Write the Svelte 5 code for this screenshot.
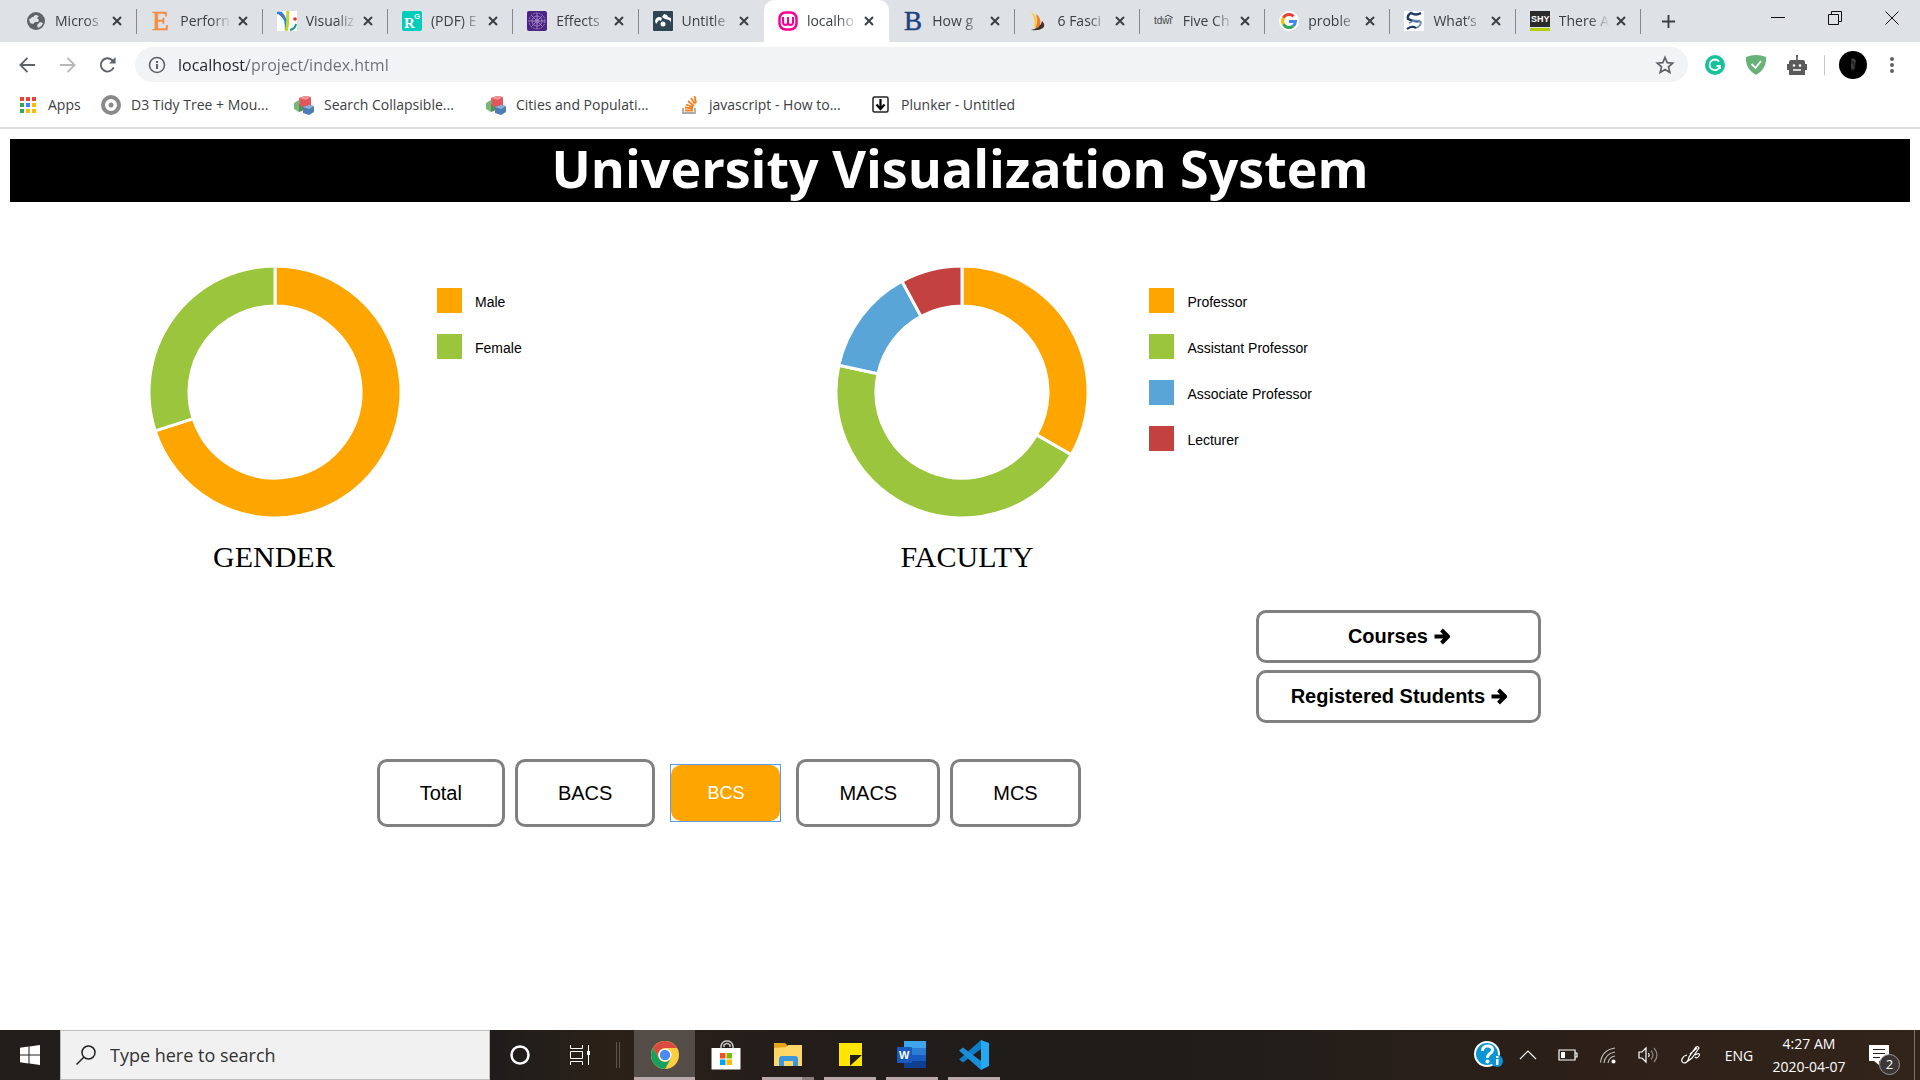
<script>
  const tabs = [
    { icon: 'globe', title: 'Micros' },
    { icon: 'elsevier', title: 'Perforn' },
    { icon: 'viz', title: 'Visualiz' },
    { icon: 'rg', title: '(PDF) E' },
    { icon: 'effects', title: 'Effects' },
    { icon: 'untitled', title: 'Untitle' },
    { icon: 'wamp', title: 'localho', active: true },
    { icon: 'brit', title: 'How g' },
    { icon: 'fasc', title: '6 Fasci' },
    { icon: 'tdwi', title: 'Five Ch' },
    { icon: 'google', title: 'proble' },
    { icon: 'whats', title: 'What’s' },
    { icon: 'shy', title: 'There A' }
  ];

  const bookmarks = [
    { icon: 'apps', label: 'Apps' },
    { icon: 'd3tree', label: 'D3 Tidy Tree + Mou...' },
    { icon: 'cubes', label: 'Search Collapsible...' },
    { icon: 'cubes', label: 'Cities and Populati...' },
    { icon: 'stack', label: 'javascript - How to...' },
    { icon: 'plunker', label: 'Plunker - Untitled' }
  ];

  const charts = [
    {
      name: 'GENDER',
      slices: [
        { label: 'Male', value: 70, color: '#ffa500' },
        { label: 'Female', value: 30, color: '#9bc53d' }
      ]
    },
    {
      name: 'FACULTY',
      wide: true,
      slices: [
        { label: 'Professor', value: 33.3, color: '#ffa500' },
        { label: 'Assistant Professor', value: 45.1, color: '#9bc53d' },
        { label: 'Associate Professor', value: 13.7, color: '#5aa5d8' },
        { label: 'Lecturer', value: 7.9, color: '#c3423f' }
      ]
    }
  ];

  const programs = ['Total', 'BACS', 'BCS', 'MACS', 'MCS'];
  let selected = $state('BCS');

  function arcs(slices) {
    const total = slices.reduce((sum, s) => sum + s.value, 0);
    const point = (r, a) => `${(r * Math.sin(a)).toFixed(2)} ${(-r * Math.cos(a)).toFixed(2)}`;
    let start = 0;
    return slices.map((s) => {
      const end = start + (s.value / total) * Math.PI * 2;
      const large = end - start > Math.PI ? 1 : 0;
      const d = `M${point(126, start)}A126 126 0 ${large} 1 ${point(126, end)}L${point(86, end)}A86 86 0 ${large} 0 ${point(86, start)}Z`;
      start = end;
      return { d, color: s.color };
    });
  }
</script>

{#snippet icon(name)}
  <svg class="icon" viewBox="0 0 20 20" aria-hidden="true">
    {#if name === 'globe'}
      <circle cx="10" cy="10" r="9" fill="#5f6368" />
      <path d="M3 8c2 0 2-2 4-2 1 0 1-2 3-2l3 1-2 2 2 2-1 2H9l-2 2-3-1zM11 14l3-3 3 1c-1 3-3 4-5 5z" fill="#dee1e6" />
    {:else if name === 'elsevier'}
      <text x="1" y="19" font-family="Liberation Serif, serif" font-size="28" fill="#f58c3c" stroke="#f58c3c" stroke-width=".6">E</text>
    {:else if name === 'viz'}
      <path d="M0 0h20v20H0z" fill="#fff" />
      <path d="M1 1l8 8 1 10" stroke="#e8332a" stroke-width="2" fill="none" />
      <path d="M0 2l4 0q6 6 5 17" stroke="#1e88e5" stroke-width="2.500" fill="none" />
      <path d="M11 0c-1 7 1 12-2 20" stroke="#c6d420" stroke-width="3" fill="none" />
      <path d="M19 13q-1 5-6 6" stroke="#159a80" stroke-width="2" fill="none" />
      <circle cx="18" cy="8" r="1.800" fill="#e8332a" />
    {:else if name === 'rg'}
      <rect width="20" height="20" rx="2" fill="#00ccbb" />
      <text x="2" y="17" font-family="Liberation Serif, serif" font-weight="bold" font-size="15" fill="#fff">R</text>
      <text x="12" y="8" font-family="Liberation Sans, sans-serif" font-weight="bold" font-size="8" fill="#fff">G</text>
    {:else if name === 'effects'}
      <rect width="20" height="20" rx="2" fill="#4b2382" />
      <g fill="none" stroke="#9b7fc0" stroke-width="1">
        <circle cx="10" cy="10" r="8" stroke-dasharray="2 1" /><circle cx="10" cy="10" r="5" /><circle cx="10" cy="10" r="2" />
        <path d="M10 2v16M2 10h16M4.500 4.500l11 11M15.500 4.500l-11 11" />
      </g>
    {:else if name === 'untitled'}
      <rect width="20" height="20" rx="1" fill="#2f4554" />
      <path d="M2 10c1-4 4-5 7-3l-1 3-2-1-3 4zM9 6l2-3 3 1 1 2 3 1v4l-2-2-4-1z" fill="#fff" />
      <circle cx="10" cy="13" r="2.500" fill="#fff" />
    {:else if name === 'wamp'}
      <rect x="1.500" y="1.500" width="17" height="17" rx="6" fill="none" stroke="#f70094" stroke-width="2.500" />
      <path d="M5 6v5q0 3 2.500 3T10 11V6M10 11q0 3 2.500 3T15 11V6" fill="none" stroke="#f70094" stroke-width="2" />
    {:else if name === 'brit'}
      <text x="1" y="19" font-family="Liberation Serif, serif" font-size="27" fill="#1f4380" stroke="#1f4380" stroke-width=".5">B</text>
    {:else if name === 'fasc'}
      <path d="M2 1q7 3 5 14l-2 2Q7 8 2 1z" fill="#ffc928" />
      <path d="M7 3q6 4 4 12l-6 4q5-6 2-16z" fill="#f47c20" />
      <path d="M13 10q4 4 1 7-4 3-12 2 10-2 11-9z" fill="#43312d" />
    {:else if name === 'tdwi'}
      <text x="0" y="13" font-family="Liberation Sans, sans-serif" font-size="10" fill="#444">tdwi</text>
      <path d="M11 6l3-2 3 2 2 1" fill="none" stroke="#444" />
    {:else if name === 'google'}
      <circle cx="10" cy="10" r="10" fill="#fff" />
      <g fill="none" stroke-width="3">
        <path d="M14.600 5.400A6.500 6.500 0 0 0 4.400 6.750" stroke="#ea4335" />
        <path d="M4.400 6.750a6.500 6.500 0 0 0 0 6.500" stroke="#fbbc05" />
        <path d="M4.400 13.250A6.500 6.500 0 0 0 14.200 15" stroke="#34a853" />
        <path d="M14.200 15a6.500 6.500 0 0 0 2.300-4.500H10" stroke="#4285f4" />
      </g>
    {:else if name === 'whats'}
      <path d="M0 0h20v20H0z" fill="#fff" />
      <path d="M17 2q-5 3-10 0-4 2-3 6 5 3 12 2" fill="none" stroke="#1f3a5f" stroke-width="2.500" />
      <path d="M3 18q5-4 9-1 5-2 5-6-5-3-12 1" fill="none" stroke="#6a8fb5" stroke-width="1.800" />
      <path d="M3 18q5-4 9-1" fill="none" stroke="#1f3a5f" stroke-width="2" />
    {:else if name === 'shy'}
      <path d="M0 0h20v16H0z" fill="#2b2b2b" /><path d="M0 17h20v3H0z" fill="#b2cc0c" />
      <text x="1" y="11" font-family="Liberation Sans, sans-serif" font-weight="bold" font-size="9" fill="#fff">SHY</text>
    {:else if name === 'apps'}
      {#each ['#ea4335', '#ea4335', '#ea4335', '#34a853', '#4285f4', '#fbbc05', '#34a853', '#fbbc05', '#fbbc05'] as c, i}
        <rect x={2 + (i % 3) * 6} y={2 + Math.floor(i / 3) * 6} width="4" height="4" fill={c} />
      {/each}
    {:else if name === 'd3tree'}
      <circle cx="10" cy="10" r="8" fill="none" stroke="#8a8a8a" stroke-width="4" /><circle cx="10" cy="10" r="2.500" fill="#8a8a8a" />
    {:else if name === 'cubes'}
      <path d="M0 8l5-3 5 3v6l-5 3-5-3z" fill="#79b877" /><path d="M5 9l5-2v8l-5 2z" fill="#4f9256" />
      <path d="M5 3l6-2 6 1v8l-5 3-6-2z" fill="#e0565b" /><path d="M5 3l7 2 5-3-6-1z" fill="#f29091" />
      <path d="M9 12l6-2 5 1v6l-5 3-6-2z" fill="#4e7cb5" /><path d="M9 12l6 2 5-3-5-1z" fill="#91b1d8" />
    {:else if name === 'stack'}
      <path d="M4 13v5h12v-5" fill="none" stroke="#aaa" stroke-width="1.800" />
      <path d="M6 15.500h8M6 12.500l8 1M7 9.500l7 2.500M9 6l6 5M12 3l4 6M15.500 1l1.500 7" stroke="#f48024" stroke-width="1.800" />
    {:else if name === 'plunker'}
      <rect x="2" y="2" width="15" height="15" rx="1.500" fill="#fff" stroke="#222" stroke-width="1.500" />
      <path d="M9.500 4v10M5.500 9.500l4 4.500 4-4.500" fill="none" stroke="#000" stroke-width="2.200" />
    {/if}
  </svg>
{/snippet}

{#snippet arrow()}
  <svg class="arrow" viewBox="0 0 17 20" aria-hidden="true"><path d="M1.500 10.500h13M8.500 4l6.500 6.500L8.500 17" /></svg>
{/snippet}

<div class="screen">
  <header class="browser">
    <div class="tabstrip">
      <div class="tabs">
        {#each tabs as tab}
          <div class="tab" class:active={tab.active}>
            {@render icon(tab.icon)}
            <button class="tab-title">{tab.title}</button>
            <button class="tab-close" aria-label="Close tab">
              <svg viewBox="0 0 10 10"><path d="M1 1l8 8M9 1L1 9" /></svg>
            </button>
          </div>
        {/each}
      </div>
      <button class="new-tab" aria-label="New tab"><svg viewBox="0 0 16 16"><path d="M8 1v14M1 8h14" /></svg></button>
      <div class="window-controls">
        <button aria-label="Minimize"><svg viewBox="0 0 14 14"><path d="M0 6.500h14" /></svg></button>
        <button aria-label="Restore"><svg viewBox="0 0 14 14"><path d="M.5 3.500h10v10H.5zM3.500 3V.5h10v10H11" /></svg></button>
        <button aria-label="Close"><svg viewBox="0 0 14 14"><path d="M.5.5l13 13M13.500.5l-13 13" /></svg></button>
      </div>
    </div>

    <div class="toolbar">
      <nav class="navigation">
        <button aria-label="Back"><svg viewBox="0 0 20 20"><path d="M18 10H3M10 2.500L2.500 10l7.500 7.500" /></svg></button>
        <button class="muted" aria-label="Forward"><svg viewBox="0 0 20 20"><path d="M2 10h15M10 2.500l7.500 7.500-7.500 7.500" /></svg></button>
        <button aria-label="Reload"><svg viewBox="0 0 20 20"><path d="M16.500 12.500A7 7 0 1 1 15 5l2 2" /><path class="solid" d="M18.500 1.500v7h-7z" /></svg></button>
      </nav>
      <div class="omnibox">
        <svg class="info" viewBox="0 0 18 18" aria-hidden="true"><circle cx="9" cy="9" r="7.500" fill="none" stroke="#5f6368" stroke-width="1.600" /><path d="M8 8h2v5H8zM8 5h2v2H8z" fill="#5f6368" /></svg>
        <input class="url" aria-label="Address" value="localhost/project/index.html" />
        <button class="star" aria-label="Bookmark this page"><svg viewBox="0 0 20 20"><path d="M10 2.500l2.200 5.200 5.500.5-4.200 3.700 1.300 5.500-4.800-2.900-4.800 2.900 1.300-5.500-4.200-3.700 5.500-.5z" /></svg></button>
      </div>
      <div class="extensions">
        <button aria-label="Grammarly"><svg viewBox="0 0 20 20"><circle cx="10" cy="10" r="10" fill="#15c39a" /><path d="M14 6.500A5.300 5.300 0 1 0 15 11h-3.500M15 10.500V14" fill="none" stroke="#fff" stroke-width="1.800" /></svg></button>
        <button aria-label="AdGuard"><svg viewBox="0 0 20 20"><path d="M0 2q5-2 10-2t10 2q1 12-10 18Q-1 14 0 2z" fill="#67b279" /><path d="M5.500 9l4 4L15 6" fill="none" stroke="#fff" stroke-width="1.800" /></svg></button>
        <button aria-label="Robot"><svg viewBox="0 0 20 20"><path d="M9.200 1h1.600v4H9.200zM4 5h12q2 0 2 2v2h2v6h-2v5H2v-5H0V9h2V7q0-2 2-2z" fill="#5a5a5a" /><path d="M9 0h2v2H9z" fill="#5a5a5a" /><circle cx="7" cy="10.500" r="1.300" fill="#fff" /><circle cx="13" cy="10.500" r="1.300" fill="#fff" /><path d="M6 15h8" stroke="#fff" stroke-width="1.500" /></svg></button>
      </div>
      <span class="divider"></span>
      <button class="avatar" aria-label="Profile"><svg viewBox="0 0 28 28"><circle cx="14" cy="14" r="14" /><path d="M12 8q4-3 5 2l-1 7-2 3q-3-1-2-6z" fill="#292929" /><path d="M13 9q3-1 3 2M13 13v3l2 1" fill="none" stroke="#555" /></svg></button>
      <button class="menu" aria-label="Menu"><svg viewBox="0 0 20 20"><circle cx="10" cy="4" r="2" /><circle cx="10" cy="10" r="2" /><circle cx="10" cy="16" r="2" /></svg></button>
    </div>

    <nav class="bookmarks">
      {#each bookmarks as mark}
        <a href="#bookmark">{@render icon(mark.icon)}<span>{mark.label}</span></a>
      {/each}
    </nav>
  </header>

  <main>
    <h1>University Visualization System</h1>

    <section class="charts">
      {#each charts as chart}
        <div class="chart" class:wide={chart.wide}>
          <figure>
            <svg class="donut" viewBox="-125 -125 250 250" role="img" aria-label={chart.name}>
              {#each arcs(chart.slices) as arc}
                <path d={arc.d} fill={arc.color} />
              {/each}
            </svg>
            <figcaption>{chart.name}</figcaption>
          </figure>
          <ul class="legend">
            {#each chart.slices as slice}
              <li><span class="swatch" style="background: {slice.color}"></span><span>{slice.label}</span></li>
            {/each}
          </ul>
        </div>
      {/each}
    </section>

    <div class="links">
      <button>Courses {@render arrow()}</button>
      <button>Registered Students {@render arrow()}</button>
    </div>

    <div class="programs">
      {#each programs as program}
        <button class:selected={program === selected} onclick={() => (selected = program)}>{program}</button>
      {/each}
    </div>
  </main>

  <footer class="taskbar">
    <button class="start" aria-label="Start"><svg viewBox="0 0 20 20"><path d="M0 2.800L8.500 1.600v8H0zM9.500 1.500L20 0v9.600H9.500zM0 10.500h8.500v8L0 17.300zM9.500 10.500H20V20L9.500 18.600z" fill="#fff" /></svg></button>
    <label class="search">
      <svg viewBox="0 0 20 20" aria-hidden="true"><circle cx="12.500" cy="7.500" r="6.500" /><path d="M8 12l-7.500 7.500" /></svg>
      <input placeholder="Type here to search" aria-label="Type here to search" />
    </label>
    <button class="task" aria-label="Cortana"><svg class="small" viewBox="0 0 20 20"><circle cx="10" cy="10" r="8.500" fill="none" stroke="#fff" stroke-width="2.500" /></svg></button>
    <button class="task" aria-label="Task view"><svg class="small" viewBox="0 0 20 20"><path d="M.5 0v3.500h12V0M.5 6.500h12v7H.5zM.5 20v-3.500h12V20M18.500 0v20" fill="none" stroke="#fff" /><path d="M17 6h3v4h-3z" fill="#fff" /></svg></button>
    <span class="grip"></span>
    <div class="apps">
      <button class="current" aria-label="Chrome">
        <svg viewBox="0 0 30 30"><circle cx="15" cy="15" r="14" fill="#ffcd40" /><path d="M2.900 8A14 14 0 0 1 27.100 8H15a7 7 0 0 0-6 10.500z" fill="#db4a3f" /><path d="M2.900 8A14 14 0 0 0 15 29l6-10.500A7 7 0 0 1 9 18.500z" fill="#17a05d" /><circle cx="15" cy="15" r="6.500" fill="#fff" /><circle cx="15" cy="15" r="5.200" fill="#4a8af4" /></svg>
      </button>
      <button aria-label="Store">
        <svg viewBox="0 0 30 30"><path d="M10 8V6q1-5 6-5t6 5v2M13 7V5q3-3 6 0v2" fill="none" stroke="#ccc" stroke-width="1.500" /><path d="M.5 8h29v21.500H.5z" fill="#fff" /><path d="M9 13h5.500v5.500H9z" fill="#f25022" /><path d="M15.500 13H21v5.500h-5.500z" fill="#7fba00" /><path d="M9 19.500h5.500V25H9z" fill="#00a4ef" /><path d="M15.500 19.500H21V25h-5.500z" fill="#ffb900" /></svg>
      </button>
      <button class="open stacked" aria-label="File Explorer">
        <svg viewBox="0 0 30 30"><path d="M1 3h11l2 2v5H1z" fill="#e8a317" /><path d="M1 8l12-1 2-2h14v21H1z" fill="#ffd667" /><path d="M6 26v-7q0-3 3-3h13q3 0 3 3v7h-5v-5h-9v5z" fill="#3a96dd" /></svg>
      </button>
      <button class="open" aria-label="Sticky Notes">
        <svg viewBox="0 0 30 30"><path d="M4 3h23v12L15 26H4z" fill="#ffe500" /><path d="M15 26V15h12z" fill="#1f1c1a" /><path d="M15 26h12V15z" fill="#ffe500" /></svg>
      </button>
      <button class="open" aria-label="Word">
        <svg viewBox="0 0 30 30"><path d="M7 1h22v7H7z" fill="#41a5ee" /><path d="M7 8h22v7H7z" fill="#2b7cd3" /><path d="M7 15h22v6H7z" fill="#185abd" /><path d="M7 21h22v7H7z" fill="#103f91" /><rect x="0" y="7" width="15" height="16" rx="1" fill="#185abd" /><text x="2" y="19" font-family="Liberation Sans, sans-serif" font-weight="bold" font-size="11" fill="#fff">W</text></svg>
      </button>
      <button class="open" aria-label="Visual Studio Code">
        <svg viewBox="0 0 30 30"><path d="M22 0l8 3v23l-8 4z" fill="#24a9f2" /><path d="M22 0v9L4 22.500 0 19.500z" fill="#0f7cc4" /><path d="M22 30v-9L4 7.500 0 10.500z" fill="#1a8ed8" /></svg>
      </button>
    </div>
    <div class="tray">
      <button aria-label="Help"><svg class="help" viewBox="0 0 30 30"><circle cx="14" cy="14" r="12" fill="#0a96d6" stroke="#fff" stroke-width="2" /><path d="M9.500 11q0-5 5-5t5 4q0 2-2.500 3.500T14.500 18" fill="none" stroke="#fff" stroke-width="3" /><circle cx="14.500" cy="21.500" r="2" fill="#fff" /><circle cx="24" cy="21" r="6" fill="#0a96d6" /><path d="M23 19h2.500v6H23zM23 16h2.500v2H23z" fill="#fff" /></svg></button>
      <button aria-label="Show hidden icons"><svg viewBox="0 0 20 20"><path d="M2 14l8-8 8 8" /></svg></button>
      <button aria-label="Battery"><svg viewBox="0 0 20 20"><path d="M1 5h16v10H1zM17 8h2v4h-2" /><path d="M3 7h4v6H3z" fill="#fff" stroke="none" /></svg></button>
      <button aria-label="Wi-Fi"><svg viewBox="0 0 20 20"><g opacity=".7"><path d="M2.500 17.500Q4 5 17 3M6 18Q7 9 17 7M10 18q1-6 7-7" /></g><circle cx="15.500" cy="16.500" r="1.500" fill="#fff" /></svg></button>
      <button aria-label="Volume"><svg viewBox="0 0 20 20"><path d="M1 7h3l4-4v14l-4-4H1zM10.500 8q1.500 2 0 4" /><path d="M13 5.500q4 4.500 0 9M16 3q6 7 0 14" opacity=".45" /></svg></button>
      <button class="ink" aria-label="Windows Ink"><svg viewBox="0 0 20 20"><path d="M7 15q-1 3-4 3-3-1-2-4 1-3 5-4M7 16l1-4 7-10q2-1 3 1l-7 10zM9 9l7-6M14 10q6-3 4 1-2 3-4 1" /></svg></button>
      <button class="lang">ENG</button>
      <button class="clock"><span>4:27 AM</span><span>2020-04-07</span></button>
      <button class="notes" aria-label="Notifications"><svg viewBox="0 0 30 30"><path d="M0 5h20v16H10v4l-5-4H0z" fill="#fff" stroke="none" /><path d="M4 9.500h12M4 13.500h12M4 17.500h7" stroke="#2b2019" /></svg><span class="badge">2</span></button>
      <span class="peek"></span>
    </div>
  </footer>
</div>

<style>
  :global(body) { margin: 0; background: #fff; }
  .screen, .screen * { box-sizing: border-box; }
  .screen { display: flex; flex-direction: column; min-height: 100vh; font-family: "Open Sans", "Noto Sans", sans-serif; color: #3c4043; }
  button { margin: 0; padding: 0; border: 0; background: none; font: inherit; color: inherit; }
  svg { display: block; flex: none; }
  .icon { width: 20px; height: 20px; }

  .browser { border-bottom: 2px solid #dadce0; }
  .tabstrip { display: flex; height: 42px; background: #dee1e6; padding-left: 12px; }
  .tabs { display: flex; flex: 1; min-width: 0; }
  .tab { position: relative; display: flex; flex: 1 1 0; align-items: center; min-width: 0; padding: 0 15px 0 14px; border-radius: 10px 10px 0 0; }
  .tab::after { content: ""; position: absolute; right: 0; top: 9px; width: 1px; height: 25px; background: #85888c; }
  .tab.active { background: #fff; }
  .tab.active::after, .tab:has(+ .active)::after { display: none; }
  .tab-title { flex: 1; min-width: 0; margin: 0 6px 0 9px; overflow: hidden; white-space: nowrap; text-align: left; font-size: 14px; line-height: 22px; -webkit-mask-image: linear-gradient(90deg, #000 60%, transparent); mask-image: linear-gradient(90deg, #000 60%, transparent); }
  .tab-close svg { width: 10px; height: 10px; stroke: #3c4043; stroke-width: 2; }
  .new-tab { flex: none; width: 54px; display: grid; place-items: center; }
  .new-tab svg { width: 15px; height: 15px; stroke: #3c4043; stroke-width: 2; }
  .window-controls { display: flex; flex: none; width: 225px; padding: 0 0 6px 54px; }
  .window-controls button { flex: 1; display: grid; place-items: center; }
  .window-controls svg { width: 14px; height: 14px; fill: none; stroke: #111; }

  .toolbar { display: flex; align-items: center; height: 45px; padding: 0 18px; }
  .navigation { display: flex; gap: 21px; width: 117px; }
  .navigation svg { width: 19px; height: 20px; fill: none; stroke: #5f6368; stroke-width: 2; }
  .navigation .solid { fill: #5f6368; stroke: none; }
  .navigation .muted { opacity: .45; }
  .omnibox { display: flex; flex: 1; align-items: center; height: 35px; padding: 0 13px; border-radius: 18px; background: #f1f3f4; }
  .info { width: 18px; height: 18px; }
  .url { flex: 1; min-width: 0; margin-left: 12px; padding: 0; border: 0; outline: 0; font: inherit; font-size: 16px; line-height: 24px; color: transparent; background: linear-gradient(90deg, #202124 69px, #6a6e73 69px); -webkit-background-clip: text; background-clip: text; }
  .star svg { width: 20px; height: 20px; fill: none; stroke: #5f6368; stroke-width: 1.7; }
  .extensions { display: flex; gap: 21px; margin: 0 17px; }
  .extensions svg { width: 20px; height: 20px; }
  .divider { width: 1px; height: 20px; background: #c6c9cd; }
  .avatar { margin: 0 15px 0 14px; }
  .avatar svg { width: 28px; height: 28px; }
  .menu svg { width: 20px; height: 20px; fill: #5f6368; }

  .bookmarks { display: grid; grid-template-columns: 83px 193px 192px 193px 192px auto; justify-content: start; align-items: center; height: 40px; padding: 0 18px 4px; }
  .bookmarks a { display: flex; align-items: center; gap: 10px; color: #3c4043; text-decoration: none; font-size: 14px; line-height: 20px; white-space: nowrap; }

  main { display: flex; flex: 1; flex-direction: column; padding: 10px 10px 0; color: #000; }
  h1 { margin: 0; height: 63px; background: #000; color: #fff; font-size: 52px; line-height: 58px; text-align: center; }
  .charts { display: grid; grid-template-columns: 687fr 1072fr; padding: 65px 0 0 140px; }
  .chart { display: flex; align-items: flex-start; gap: 37px; }
  .chart.wide { gap: 62px; }
  figure { margin: 0; }
  .donut { width: 250px; height: 250px; }
  .donut path { stroke: #fff; stroke-width: 3; }
  figcaption { margin-top: 23px; padding-left: 63px; font: 30px/34px "Liberation Serif", serif; }
  .legend { display: grid; gap: 21px; margin: 0; padding: 21px 0 0; list-style: none; font: 14px/28px "Liberation Sans", sans-serif; }
  .legend li { display: flex; gap: 13px; height: 25px; }
  .swatch { width: 25px; height: 25px; }

  .links { display: grid; gap: 7px; align-self: flex-end; width: 285px; margin: 36px 19.4% 0 0; }
  .links button { display: flex; align-items: center; justify-content: center; gap: 5px; height: 53px; padding-bottom: 2px; border: 3px solid #808080; border-radius: 10px; font: bold 20px/24px "Liberation Sans", sans-serif; }
  .arrow { width: 17px; height: 20px; fill: none; stroke: #000; stroke-width: 4; stroke-linejoin: round; }
  .programs { display: flex; align-items: center; gap: 10px; margin: 36px 0 0 19.3%; font: 20px/24px "Liberation Sans", sans-serif; }
  .programs button { height: 68px; padding: 0 40px; border: 3px solid #808080; border-radius: 10px; }
  .programs .selected { position: relative; height: 56px; margin: 0 6px; padding: 0 36px; border: 0; border-radius: 10px; background: #ffa500; color: #fff; font-size: 18px; outline: 0; }
  .programs .selected::after { content: ""; position: absolute; inset: -1px; border: 1px solid #5c9bf0; }

  .taskbar { display: flex; height: 50px; background: linear-gradient(90deg, #211e1b 0, #1f1d1b 26%, #2c2118 32%, #241d1a 40%, #1f1c1a 60%, #2b2019 80%, #33241a); color: #fff; }
  .start { display: grid; place-items: center; width: 60px; }
  .start svg { width: 20px; height: 20px; }
  .search { display: flex; align-items: center; width: 430px; padding: 0 15px; border: 1px solid #bdbdbd; background: #f1f1f1; }
  .search svg { width: 20px; height: 20px; fill: none; stroke: #222; stroke-width: 1.5; }
  .search input { flex: 1; min-width: 0; margin-left: 14px; padding: 0; border: 0; outline: 0; background: none; font: inherit; font-size: 18px; }
  .search input::placeholder { color: #333; opacity: 1; }
  .task { display: grid; place-items: center; width: 60px; }
  .small { width: 20px; height: 20px; }
  .grip { align-self: center; width: 4px; height: 26px; margin: 0 14px 0 6px; border: solid #5c544d; border-width: 0 1px; }
  .apps { display: flex; }
  .apps button { position: relative; display: grid; place-items: center; width: 62px; }
  .apps svg { width: 30px; height: 30px; }
  .apps .current { width: 61px; background: #544c47; }
  .apps .open::after, .apps .current::after { content: ""; position: absolute; inset: auto 5px 0; height: 3px; background: #b8a8a9; }
  .apps .current::after { inset: auto 0 0; }
  .apps .stacked::after { background: linear-gradient(90deg, #b8a8a9 40px, #897d7d 40px); }
  .tray { display: flex; align-items: center; margin-left: auto; }
  .tray button { display: grid; place-items: center; width: 40px; height: 50px; }
  .tray svg { width: 20px; height: 20px; fill: none; stroke: #fff; stroke-width: 1.2; }
  .tray .help { width: 30px; height: 30px; stroke: none; }
  .tray .ink { width: 46px; }
  .tray .lang { width: 50px; font-size: 14px; }
  .tray .clock { width: 90px; align-content: center; font-size: 14px; line-height: 23px; }
  .tray .notes { position: relative; width: 60px; }
  .tray .notes svg { width: 30px; height: 30px; }
  .badge { position: absolute; left: 25px; top: 24px; width: 21px; height: 21px; border: 1px solid #999; border-radius: 50%; background: #3c3734; font-size: 13px; line-height: 19px; text-align: center; }
  .peek { width: 6px; height: 50px; border-left: 1px solid #7c726b; }
</style>
